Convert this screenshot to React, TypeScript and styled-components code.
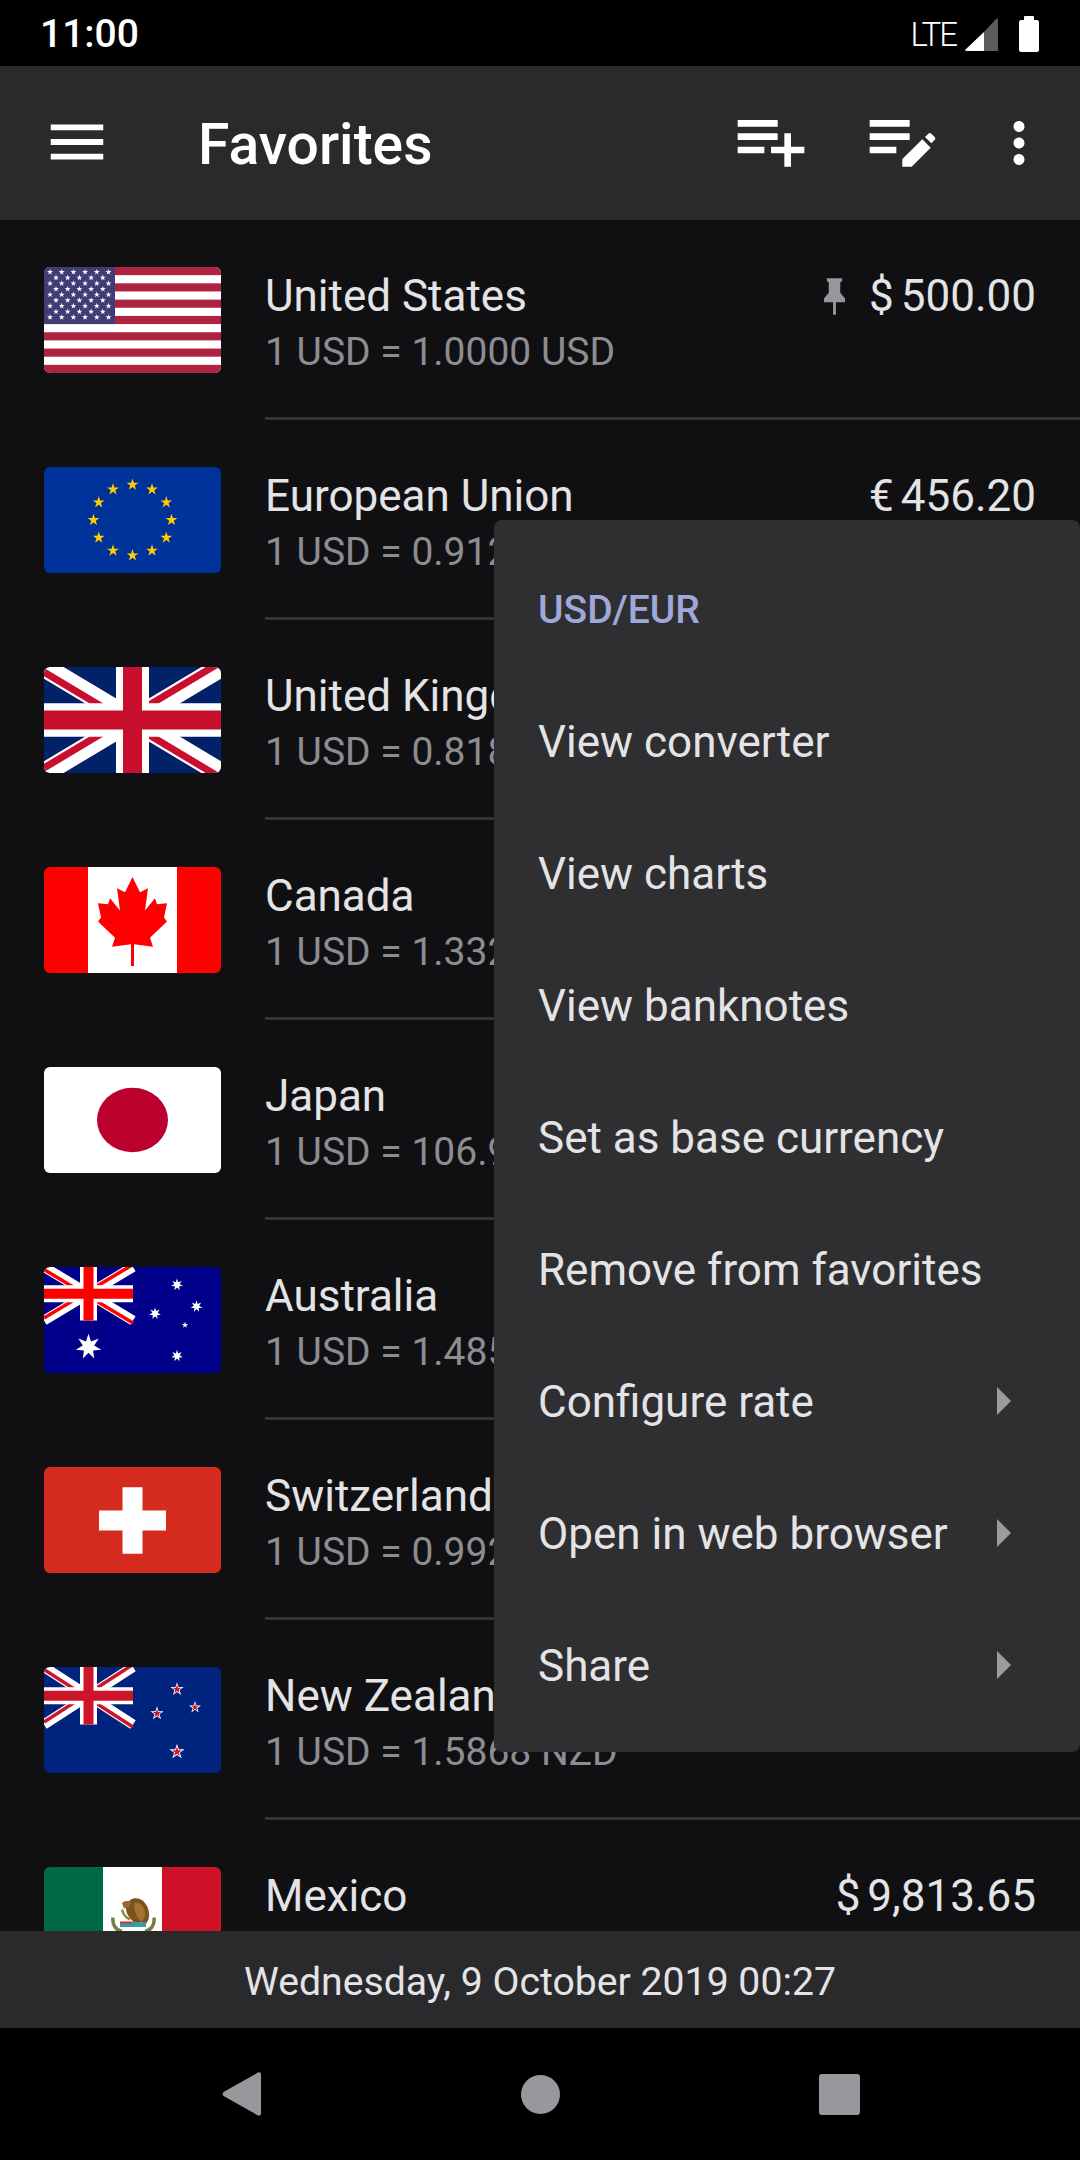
import React from "react";
import styled, { createGlobalStyle } from "styled-components";

const GlobalStyle = createGlobalStyle`
    html, body {
        margin: 0;
        padding: 0;
        background: #000;
    }
`;

const Screen = styled.div`
    position: relative;
    display: flex;
    flex-direction: column;
    width: 1080px;
    height: 2160px;
    overflow: hidden;
    background: #101012;
    font-family: Roboto, "Liberation Sans", sans-serif;
    color: #e4e4e7;
`;

const StatusBar = styled.div`
    display: flex;
    align-items: center;
    justify-content: space-between;
    flex: 0 0 66px;
    padding: 2px 41px 0 40px;
    background: #000;
    box-sizing: border-box;
`;

const Clock = styled.span`
    font-size: 39px;
    font-weight: 500;
    color: #fff;
`;

const StatusIcons = styled.div`
    display: flex;
    align-items: center;
`;

const NetworkLabel = styled.span`
    margin-right: 9px;
    font-size: 33px;
    font-weight: 300;
    letter-spacing: -2px;
    color: #fff;
`;

const SignalIcon = styled.svg`
    display: block;
    margin-right: 21px;
`;

const Toolbar = styled.div`
    display: flex;
    align-items: center;
    flex: 0 0 154px;
    padding: 0 28px 0 42px;
    background: #2a2a2d;
    box-sizing: border-box;
`;

const Title = styled.div`
    flex: 1;
    margin-left: 86px;
    padding-top: 2px;
    font-size: 57px;
    font-weight: 500;
    color: #fff;
`;

const ToolbarIcon = styled.svg<{ $gap?: number; $lift?: number }>`
    display: block;
    fill: #fff;
    margin-left: ${({ $gap }) => $gap ?? 0}px;
    margin-bottom: ${({ $lift }) => $lift ?? 0}px;
`;

const List = styled.div`
    flex: 1;
    min-height: 0;
    overflow: hidden;
`;

const Row = styled.div`
    position: relative;
    display: flex;
    align-items: center;
    height: 200px;
    padding: 0 44px;
    box-sizing: border-box;
`;

const Divider = styled.div`
    position: absolute;
    left: 265px;
    right: 0;
    bottom: 0;
    height: 3px;
    background: #343437;
`;

const FlagBox = styled.div`
    flex: 0 0 177px;
    height: 106px;
    border-radius: 6px;
    overflow: hidden;

    > svg {
        display: block;
        width: 100%;
        height: 100%;
    }
`;

const RowText = styled.div`
    flex: 1;
    min-width: 0;
    margin-left: 44px;
    margin-top: 5px;
`;

const RowHead = styled.div`
    display: flex;
    align-items: center;
    justify-content: space-between;
`;

const Name = styled.div`
    font-size: 44px;
    line-height: 52px;
    color: #e4e4e7;
`;

const Amount = styled.div`
    display: flex;
    align-items: center;
    font-size: 44px;
    line-height: 52px;
    color: #e4e4e7;
`;

const Symbol = styled.span`
    margin-right: 7px;
`;

const PinIcon = styled.svg`
    display: block;
    margin-right: 23px;
    fill: #97979b;
`;

const Rate = styled.div`
    margin-top: 7px;
    font-size: 39px;
    line-height: 46px;
    color: #8d8d91;
`;

const Footer = styled.div`
    display: flex;
    align-items: center;
    justify-content: center;
    flex: 0 0 97px;
    padding-top: 4px;
    box-sizing: border-box;
    background: #2a2a2d;
    font-size: 39.2px;
    color: #e4e4e7;
`;

const NavBar = styled.div`
    display: flex;
    align-items: center;
    justify-content: center;
    flex: 0 0 132px;
    background: #000;
`;

const NavSlot = styled.div`
    display: flex;
    justify-content: center;
    width: 299px;
`;

const Menu = styled.div`
    position: absolute;
    top: 520px;
    left: 494px;
    right: 0;
    padding: 24px 0 20px;
    background: #2f2f32;
    border-radius: 8px;
`;

const MenuHeader = styled.div`
    display: flex;
    align-items: center;
    height: 132px;
    padding: 0 44px;
    font-size: 39px;
    font-weight: 500;
    color: #9fa8da;
`;

const MenuItem = styled.div`
    display: flex;
    align-items: center;
    justify-content: space-between;
    height: 132px;
    padding: 0 69px 0 44px;
    font-size: 44px;
    color: #e4e4e7;
`;

const Arrow = styled.span`
    width: 0;
    height: 0;
    margin-bottom: 2px;
    border-top: 14px solid transparent;
    border-bottom: 14px solid transparent;
    border-left: 14px solid #9b9b9e;
`;

const star = (cx: number, cy: number, r: number, fill: string, points = 5, inner = 0.382) => {
    const pts: string[] = [];
    for (let i = 0; i < points * 2; i++) {
        const rad = i % 2 === 0 ? r : r * inner;
        const a = -Math.PI / 2 + (i * Math.PI) / points;
        pts.push(`${(cx + rad * Math.cos(a)).toFixed(2)},${(cy + rad * Math.sin(a)).toFixed(2)}`);
    }
    return <polygon key={`${cx}-${cy}-${r}-${fill}`} points={pts.join(" ")} fill={fill} />;
};

// w and h are the canton size; red arms sit off the white diagonals like the real flag
const UnionJack = ({ w, h, red, bar, barWhite, diag, diagRed }: { w: number; h: number; red: string; bar: number; barWhite: number; diag: number; diagRed: number }) => {
    const cx = w / 2;
    const cy = h / 2;
    const off = diag / 4;
    return (
        <g>
            <path d={`M0 0L${w} ${h}M${w} 0L0 ${h}`} stroke="#fff" strokeWidth={diag} />
            <path d={`M0 ${off}L${cx} ${cy + off}`} stroke={red} strokeWidth={diagRed} />
            <path d={`M${w} ${h + off}L${cx} ${cy + off}`} stroke={red} strokeWidth={diagRed} />
            <path d={`M${w} ${-off}L${cx} ${cy - off}`} stroke={red} strokeWidth={diagRed} />
            <path d={`M0 ${h - off}L${cx} ${cy - off}`} stroke={red} strokeWidth={diagRed} />
            <path d={`M${cx} 0V${h}M0 ${cy}H${w}`} stroke="#fff" strokeWidth={barWhite} />
            <path d={`M${cx} 0V${h}M0 ${cy}H${w}`} stroke={red} strokeWidth={bar} />
        </g>
    );
};

const FlagUS = () => {
    const stripes = [0, 1, 2, 3, 4, 5, 6].map((i) => (
        <rect key={i} x="0" y={(i * 2 * 105) / 13} width="177" height={105 / 13} fill="#ad2340" />
    ));
    const stars: React.ReactNode[] = [];
    for (let r = 0; r < 9; r++) {
        const n = r % 2 === 0 ? 6 : 5;
        for (let c = 0; c < n; c++) {
            const x = (r % 2 === 0 ? 6 : 12) + c * 11.7;
            stars.push(star(x, 5 + r * 5.6, 3.1, "#fff"));
        }
    }
    return (
        <svg viewBox="0 0 177 105" preserveAspectRatio="none">
            <rect width="177" height="105" fill="#fff" />
            {stripes}
            <rect width="71" height="56.5" fill="#3f3d75" />
            {stars}
        </svg>
    );
};

const FlagEU = () => {
    const stars = Array.from({ length: 12 }, (_, i) => {
        const a = (i * Math.PI) / 6;
        return star(88.5 + 39 * Math.sin(a), 52.5 - 35 * Math.cos(a), 6.2, "#ffcc00");
    });
    return (
        <svg viewBox="0 0 177 105" preserveAspectRatio="none">
            <rect width="177" height="105" fill="#003399" />
            {stars}
        </svg>
    );
};

const FlagUK = () => (
    <svg viewBox="0 0 177 105" preserveAspectRatio="none">
        <rect width="177" height="105" fill="#012169" />
        <UnionJack w={177} h={105} red="#c8102e" bar={19} barWhite={33} diag={20} diagRed={7} />
    </svg>
);

const FlagCA = () => (
    <svg viewBox="0 0 177 105" preserveAspectRatio="none">
        <rect width="177" height="105" fill="#f00" />
        <rect x="44" width="89" height="105" fill="#fff" />
        <path
            fill="#f00"
            d="M88.500 10L96 25L104 21L101 43L111 31L113 37L123 36L120 50L123 54L106 70L109 79L90 76.500V98H87V76.500L68 79L71 70L54 54L57 50L54 36L64 37L66 31L76 43L73 21L81 25Z"
        />
    </svg>
);

const FlagJP = () => (
    <svg viewBox="0 0 177 105" preserveAspectRatio="none">
        <rect width="177" height="105" fill="#fff" />
        <ellipse cx="88.500" cy="52.500" rx="35.500" ry="32" fill="#bc002d" />
    </svg>
);

const FlagAU = () => (
    <svg viewBox="0 0 177 105" preserveAspectRatio="none">
        <rect width="177" height="105" fill="#00008b" />
        <UnionJack w={89} h={53} red="#f00" bar={10} barWhite={17} diag={10} diagRed={3.5} />
        {star(44.5, 79, 13, "#fff", 7, 0.45)}
        {star(133, 17.5, 6, "#fff", 7, 0.45)}
        {star(111, 46, 6, "#fff", 7, 0.45)}
        {star(152.5, 39, 6, "#fff", 7, 0.45)}
        {star(133, 88, 6, "#fff", 7, 0.45)}
        {star(141, 57.5, 3.4, "#fff", 5)}
    </svg>
);

const FlagCH = () => (
    <svg viewBox="0 0 177 105" preserveAspectRatio="none">
        <rect width="177" height="105" fill="#d52b1e" />
        <path d="M78.500 20H98.500V43H122V63H98.500V86H78.500V63H55V43H78.500Z" fill="#fff" />
    </svg>
);

const FlagNZ = () => (
    <svg viewBox="0 0 177 105" preserveAspectRatio="none">
        <rect width="177" height="105" fill="#00247d" />
        <UnionJack w={89} h={57} red="#cc142b" bar={10} barWhite={17} diag={10} diagRed={3.5} />
        {star(133, 22, 7, "#fff")}
        {star(133, 22, 4.6, "#cc142b")}
        {star(113, 46, 7, "#fff")}
        {star(113, 46, 4.6, "#cc142b")}
        {star(151, 40, 6.4, "#fff")}
        {star(151, 40, 4, "#cc142b")}
        {star(133, 84, 8, "#fff")}
        {star(133, 84, 5.2, "#cc142b")}
    </svg>
);

const FlagMX = () => (
    <svg viewBox="0 0 177 105" preserveAspectRatio="none">
        <rect width="59" height="105" fill="#006847" />
        <rect x="59" width="59" height="105" fill="#fff" />
        <rect x="118" width="59" height="105" fill="#ce1126" />
        <path d="M86 33C93 28 103 33 105 45C106 52 102 58 98 59C92 58 86 52 83 46C81 40 82 36 86 33Z" fill="#7d5220" />
        <path d="M90 36C95 34 100 38 101 45C101 50 99 53 97 54C93 50 90 44 90 36Z" fill="#a3742f" />
        <path d="M78 36C80 33 84 33 87 35L85 40L80 41Z" fill="#9a6a2a" />
        <path d="M78 42C79 47 82 50 86 52" fill="none" stroke="#8a8f3c" strokeWidth="2.500" />
        <path d="M76 57H102" stroke="#3a9aa8" strokeWidth="5" />
        <path d="M76 55H88" stroke="#c8352c" strokeWidth="2" />
        <path d="M69 50C68 57 72 63 78 64" fill="none" stroke="#76803a" strokeWidth="3.500" />
        <path d="M110 50C111 57 107 63 101 64" fill="none" stroke="#76803a" strokeWidth="3.500" />
    </svg>
);

type Currency = {
    name: string;
    rate: string;
    symbol?: string;
    value?: string;
    pinned?: boolean;
    flag: React.ReactNode;
};

const CURRENCIES: Currency[] = [
    { name: "United States", rate: "1 USD = 1.0000 USD", symbol: "$", value: "500.00", pinned: true, flag: <FlagUS /> },
    { name: "European Union", rate: "1 USD = 0.9124 EUR", symbol: "€", value: "456.20", flag: <FlagEU /> },
    { name: "United Kingdom", rate: "1 USD = 0.8181 GBP", flag: <FlagUK /> },
    { name: "Canada", rate: "1 USD = 1.3324 CAD", flag: <FlagCA /> },
    { name: "Japan", rate: "1 USD = 106.98 JPY", flag: <FlagJP /> },
    { name: "Australia", rate: "1 USD = 1.4851 AUD", flag: <FlagAU /> },
    { name: "Switzerland", rate: "1 USD = 0.9926 CHF", flag: <FlagCH /> },
    { name: "New Zealand", rate: "1 USD = 1.5868 NZD", flag: <FlagNZ /> },
    { name: "Mexico", rate: "1 USD = 19.627 MXN", symbol: "$", value: "9,813.65", flag: <FlagMX /> },
];

const MENU_ITEMS: { label: string; more?: boolean }[] = [
    { label: "View converter" },
    { label: "View charts" },
    { label: "View banknotes" },
    { label: "Set as base currency" },
    { label: "Remove from favorites" },
    { label: "Configure rate", more: true },
    { label: "Open in web browser", more: true },
    { label: "Share", more: true },
];

export default function App() {
    return (
        <Screen>
            <GlobalStyle />
            <StatusBar>
                <Clock>11:00</Clock>
                <StatusIcons>
                    <NetworkLabel>LTE</NetworkLabel>
                    <SignalIcon width="33" height="33" viewBox="0 0 33 33">
                        <path d="M31 1C32 0 33 .5 33 2V33H19V14Z" fill="#5c5c5c" />
                        <path d="M19 14V33H2C0 33 -.5 32 1 31Z" fill="#fff" />
                    </SignalIcon>
                    <svg width="20" height="36" viewBox="0 0 20 36">
                        <path d="M5 1C5 .5 5.500 0 6 0H14C14.500 0 15 .5 15 1V4H18C19 4 20 5 20 6V34C20 35 19 36 18 36H2C1 36 0 35 0 34V6C0 5 1 4 2 4H5Z" fill="#fff" />
                    </svg>
                </StatusIcons>
            </StatusBar>
            <Toolbar>
                <ToolbarIcon width="70" height="70" viewBox="0 0 24 24" $lift={2}>
                    <path d="M3 18h18v-2H3v2zm0-5h18v-2H3v2zm0-7v2h18V6H3z" />
                </ToolbarIcon>
                <Title>Favorites</Title>
                <ToolbarIcon width="80" height="80" viewBox="0 0 24 24" $lift={7}>
                    <path d="M14 10H2v2h12v-2zm0-4H2v2h12V6zm4 8v-4h-2v4h-4v2h4v4h2v-4h4v-2h-4zM2 16h8v-2H2v2z" />
                </ToolbarIcon>
                <ToolbarIcon $gap={52} $lift={6} width="80" height="80" viewBox="0 0 24 24">
                    <path d="M14 10H2v2h12v-2zm0-4H2v2h12V6zM2 16h8v-2H2v2zm9.800 4v-2.300l6-5.900 2.500 2.500-5.700 5.700zM18.600 11.100l1-1c.25-.25.65-.25.9 0l1 1c.25.25.25.65 0 .9l-1 1z" />
                </ToolbarIcon>
                <ToolbarIcon $gap={43} $lift={1} width="66" height="66" viewBox="0 0 24 24">
                    <path d="M12 8c1.100 0 2-.9 2-2s-.9-2-2-2-2 .9-2 2 .9 2 2 2zm0 2c-1.100 0-2 .9-2 2s.9 2 2 2 2-.9 2-2-.9-2-2-2zm0 6c-1.100 0-2 .9-2 2s.9 2 2 2 2-.9 2-2-.9-2-2-2z" />
                </ToolbarIcon>
            </Toolbar>
            <List>
                {CURRENCIES.map((c) => (
                    <Row key={c.name}>
                        <FlagBox>{c.flag}</FlagBox>
                        <RowText>
                            <RowHead>
                                <Name>{c.name}</Name>
                                {c.value && (
                                    <Amount>
                                        {c.pinned && (
                                            <PinIcon width="23" height="37" viewBox="0 0 24 38">
                                                <path d="M4 0H20V3L18 4V15L23 21V25H13.500V38H10.500V25H1V21L6 15V4L4 3Z" />
                                            </PinIcon>
                                        )}
                                        <Symbol>{c.symbol}</Symbol>
                                        {c.value}
                                    </Amount>
                                )}
                            </RowHead>
                            <Rate>{c.rate}</Rate>
                        </RowText>
                        <Divider />
                    </Row>
                ))}
            </List>
            <Footer>Wednesday, 9 October 2019 00:27</Footer>
            <NavBar>
                <NavSlot>
                    <svg width="39" height="44" viewBox="0 0 39 44">
                        <path d="M36 .5C37.500 0 39 .8 39 2.500V41.500C39 43.200 37.500 44 36 43.500L1.500 24C.3 23 .3 21 1.500 20Z" fill="#98989c" />
                    </svg>
                </NavSlot>
                <NavSlot>
                    <svg width="39" height="39" viewBox="0 0 39 39">
                        <circle cx="19.500" cy="19.500" r="19.500" fill="#98989c" />
                    </svg>
                </NavSlot>
                <NavSlot>
                    <svg width="41" height="41" viewBox="0 0 41 41">
                        <rect width="41" height="41" rx="3" fill="#98989c" />
                    </svg>
                </NavSlot>
            </NavBar>
            <Menu>
                <MenuHeader>USD/EUR</MenuHeader>
                {MENU_ITEMS.map((item) => (
                    <MenuItem key={item.label}>
                        {item.label}
                        {item.more && <Arrow />}
                    </MenuItem>
                ))}
            </Menu>
        </Screen>
    );
}
